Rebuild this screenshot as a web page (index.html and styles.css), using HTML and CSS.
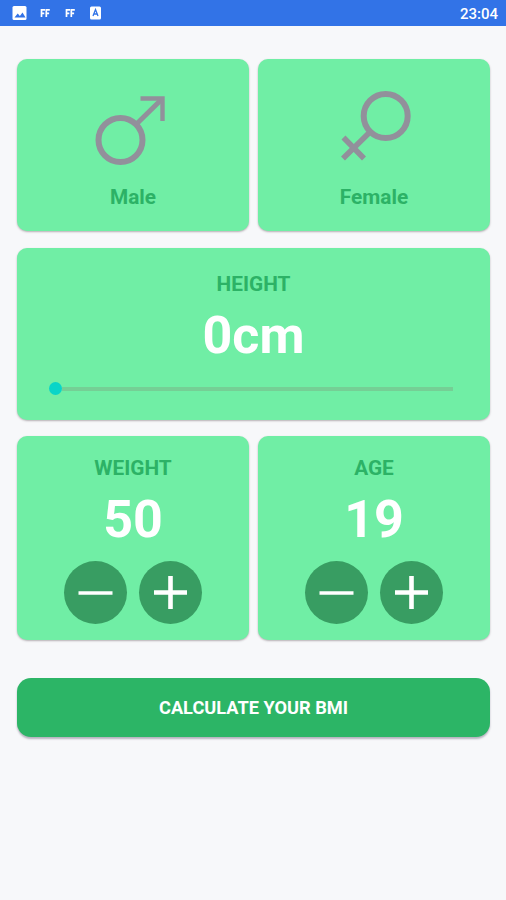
FILE: index.html
```html
<!DOCTYPE html>
<html lang="en">
<head>
<meta charset="utf-8">
<title>BMI Calculator</title>
<link rel="stylesheet" href="styles.css">
</head>
<body>
<header class="status">
  <svg class="status-icons" width="110" height="26" viewBox="0 0 110 26">
    <rect x="12.5" y="6" width="14" height="14" rx="1.5" fill="#fff"/>
    <path d="M14.5 17.5l3.2-4 2.2 2.5 2.6-3.5 3 5z" fill="#3273e7"/>
    <path d="M41.5 17V9.800h3.500M41.500 13.300h2.800M46.300 17V9.800h3.500M46.300 13.300h2.800" class="flag"/>
    <path d="M66.500 17V9.800h3.500M66.500 13.300h2.800M71.300 17V9.800h3.500M71.300 13.300h2.800" class="flag"/>
    <rect x="90" y="6.500" width="11" height="13" rx="1.500" fill="#fff"/>
    <path d="M93 16l2.500-6.500 2.500 6.500M94 14h3" fill="none" stroke="#3273e7" stroke-width="1.300"/>
  </svg>
  <span class="clock">23:04</span>
</header>
<main class="content">
  <section class="row genders">
    <div class="card gender">
      <svg width="80" height="80" viewBox="0 0 80 80" class="symbol">
        <circle cx="27.500" cy="49" r="22"/>
        <path d="M43.500 33L69 8" stroke-width="5"/>
        <path d="M47.500 7.500H69.500V30" stroke-width="4.400"/>
      </svg>
      <span class="label">Male</span>
    </div>
    <div class="card gender">
      <svg width="80" height="80" viewBox="0 0 80 80" class="symbol">
        <circle cx="51.700" cy="25" r="22"/>
        <path d="M36 41L9 67.500M9.500 46.500L30 67.500" stroke-width="5.600"/>
      </svg>
      <span class="label">Female</span>
    </div>
  </section>
  <section class="card height">
    <span class="label">HEIGHT</span>
    <span class="value">0cm</span>
    <div class="slider"><span class="track"></span></div>
  </section>
  <section class="row counters">
    <div class="card counter">
      <span class="label">WEIGHT</span>
      <span class="value">50</span>
      <div class="buttons">
        <button class="round" aria-label="Decrease weight"><svg width="63" height="63" viewBox="0 0 63 63"><path d="M14.500 32H48.500" stroke-width="3.600"/></svg></button>
        <button class="round" aria-label="Increase weight"><svg width="63" height="63" viewBox="0 0 63 63"><path d="M15 31.500H48M31.500 15V48" stroke-width="4.600"/></svg></button>
      </div>
    </div>
    <div class="card counter">
      <span class="label">AGE</span>
      <span class="value">19</span>
      <div class="buttons">
        <button class="round" aria-label="Decrease age"><svg width="63" height="63" viewBox="0 0 63 63"><path d="M14.500 32H48.500" stroke-width="3.600"/></svg></button>
        <button class="round" aria-label="Increase age"><svg width="63" height="63" viewBox="0 0 63 63"><path d="M15 31.500H48M31.500 15V48" stroke-width="4.600"/></svg></button>
      </div>
    </div>
  </section>
  <button class="calculate">CALCULATE YOUR BMI</button>
</main>
</body>
</html>
```
FILE: styles.css
```css
* { box-sizing: border-box; }
body {
  margin: 0;
  min-height: 900px;
  background: #f7f8fa;
  font-family: Roboto, "Liberation Sans", sans-serif;
}
.status {
  display: flex;
  justify-content: space-between;
  align-items: center;
  height: 25.5px;
  padding-right: 8px;
  background: #3273e7;
  color: #fff;
}
.status-icons { display: block; }
.flag { fill: none; stroke: #fff; stroke-width: 1.7; }
.clock { font-size: 15px; line-height: 26px; font-weight: 500; padding-top: 2px; }
.content { padding: 33.5px 16px 0 17px; }
.row { display: grid; grid-template-columns: 1fr 1fr; gap: 9px; }
.card {
  display: flex;
  flex-direction: column;
  align-items: center;
  background: #70eea5;
  border-radius: 10px;
  box-shadow: 0 1px 2px rgba(60, 40, 50, 0.35);
}
.gender { height: 172px; padding-top: 32px; }
.symbol { display: block; fill: none; stroke: #92909b; stroke-width: 6; }
.label { font-size: 20.8px; line-height: 24px; font-weight: 700; color: #2cb266; }
.gender .label { margin-top: 14px; }
.value { font-size: 52px; line-height: 60px; font-weight: 700; color: #fff; }
.height { height: 172px; margin-top: 17px; padding-top: 24px; }
.height .value { margin-top: 10px; }
.slider {
  display: flex;
  align-items: center;
  align-self: flex-start;
  width: 404px;
  height: 13px;
  margin: 16px 0 0 32px;
}
.slider::before {
  content: "";
  width: 13px;
  height: 13px;
  border-radius: 50%;
  background: #09d5c8;
}
.track { flex: 1; height: 4px; background: #75cf95; }
.counters { margin-top: 16px; }
.counter { height: 204px; padding-top: 20px; }
.counter .value { margin-top: 10px; }
.buttons { display: flex; gap: 12px; margin-top: 11px; }
.round {
  width: 63px;
  height: 63px;
  padding: 0;
  border: 0;
  border-radius: 50%;
  background: #389d62;
}
.round svg { display: block; fill: none; stroke: #fff; }
.calculate {
  display: block;
  width: 100%;
  height: 59px;
  margin-top: 38px;
  padding: 0;
  border: 0;
  border-radius: 14px;
  background: #2cb566;
  box-shadow: 0 2px 2px rgba(60, 50, 80, 0.35);
  color: #fff;
  font-family: inherit;
  font-size: 18.2px;
  font-weight: 700;
}
```
